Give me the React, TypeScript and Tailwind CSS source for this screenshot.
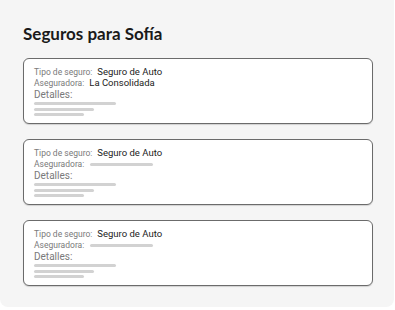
const cards = [
  { tipo: "Seguro de Auto", aseguradora: "La Consolidada" },
  { tipo: "Seguro de Auto", aseguradora: null },
  { tipo: "Seguro de Auto", aseguradora: null },
];

function Card({ tipo, aseguradora }: { tipo: string; aseguradora: string | null }) {
  return (
    <div className="h-[66px] rounded-[6px] border border-[#6b6b6b] bg-white px-[10px] pt-[8px] shadow-[0_1px_1px_rgba(0,0,0,0.15)] font-['Roboto',sans-serif]">
      <div className="flex h-[11px] items-center">
        <span className="text-[8.5px] text-[#7a7a7a]">Tipo de seguro:</span>
        <span className="ml-[5px] text-[9.5px] font-normal text-[#222]">{tipo}</span>
      </div>
      <div className="flex h-[11px] items-center">
        <span className="text-[8.5px] text-[#7a7a7a]">Aseguradora:</span>
        {aseguradora ? (
          <span className="ml-[5px] text-[9.5px] font-normal text-[#222]">{aseguradora}</span>
        ) : (
          <span className="ml-[6px] h-[3px] w-[63px] rounded-full bg-[#d2d2d2]" />
        )}
      </div>
      <div className="flex h-[11px] items-center text-[10px] text-[#7a7a7a]">Detalles:</div>
      <div className="mt-[2px] flex flex-col gap-[2.5px]">
        <div className="h-[3px] w-[82px] rounded-full bg-[#d2d2d2]" />
        <div className="h-[3px] w-[60px] rounded-full bg-[#d2d2d2]" />
        <div className="h-[3px] w-[50px] rounded-full bg-[#d2d2d2]" />
      </div>
    </div>
  );
}

export default function App() {
  return (
    <div className="h-[310px] w-[395px] bg-white">
      <div className="h-[307px] w-[394px] rounded-b-[8px] bg-[#f5f5f5] px-[23px] pt-[23px]">
        <h1 className="font-['Lato',sans-serif] text-[17px] font-bold leading-[22px] text-[#1a1a1a]">
          Seguros para Sofía
        </h1>
        <div className="mt-[13px] flex w-[350px] flex-col gap-[15px]">
          {cards.map((c, i) => (
            <Card key={i} tipo={c.tipo} aseguradora={c.aseguradora} />
          ))}
        </div>
      </div>
    </div>
  );
}
